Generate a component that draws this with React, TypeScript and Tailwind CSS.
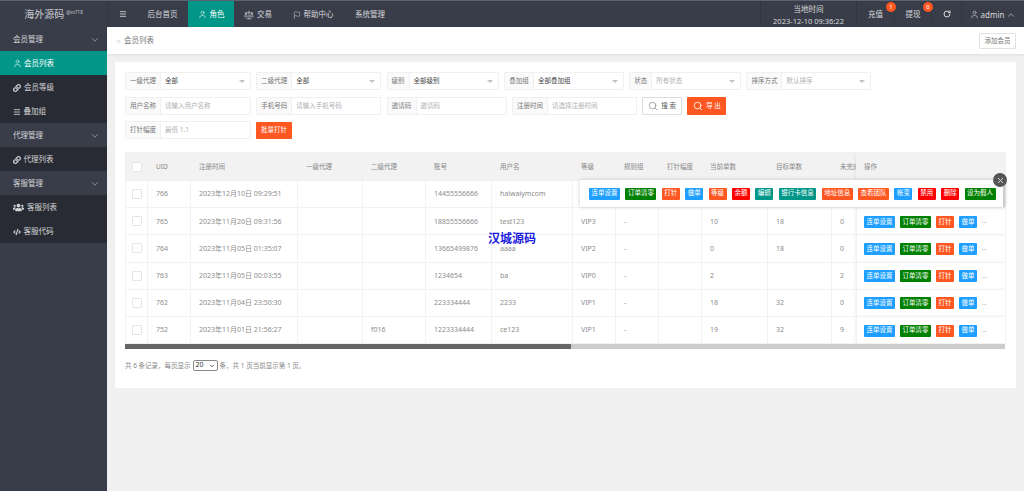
import { User, Menu, Flag, Scale, RotateCw, ChevronDown, ChevronUp, ChevronsRight, Search, X } from "lucide-react";
import { FaLink, FaUsers, FaCode } from "react-icons/fa";

const FONT = "font-['Noto_Sans','Noto_Sans_CJK_SC',sans-serif]";

function NavTab({ children, active, w }: { children: React.ReactNode; active?: boolean; w: string }) {
  return (
    <div className={`${w} flex items-center justify-center gap-[3px] pt-[1px] text-[7.5px] ${active ? "bg-[#009688] text-white" : "text-[#d8d9dc]"}`}>
      {children}
    </div>
  );
}

function SideHead({ label }: { label: string }) {
  return (
    <div className="h-6 flex items-center justify-between pl-[13px] pr-[7px] pt-[1px] bg-[#393d49] text-[#d4d5d8] text-[7.5px]">
      <span>{label}</span>
      <ChevronDown size={10} strokeWidth={1.5} className="text-[#c2c3c7]" />
    </div>
  );
}

function SideItem({ icon, label, active, gap }: { icon: React.ReactNode; label: string; active?: boolean; gap?: string }) {
  return (
    <div className={`h-6 flex items-center ${gap ?? "gap-[3px]"} pl-[13px] pt-[1px] text-[7.5px] ${active ? "bg-[#009688] text-white" : "bg-[#282b33] text-[#d4d5d8]"}`}>
      {icon}
      <span>{label}</span>
    </div>
  );
}

function Field({ label, value, placeholder, w, lw, select }: { label: string; value?: string; placeholder?: string; w: string; lw: string; select?: boolean }) {
  return (
    <div className={`${w} h-[18px] flex border border-[#f0f0f0] rounded-[1px] bg-white text-[6.5px]`}>
      <div className={`${lw} shrink-0 flex items-center justify-center bg-[#fafafa] border-r border-[#f0f0f0] text-[#777777]`}>{label}</div>
      <div className={`flex-1 flex items-center justify-between pl-[4px] pr-[5px] ${value ? "text-[#444444]" : "text-[#b0b0b0]"}`}>
        <span>{value ?? placeholder}</span>
        {select && <span className="w-0 h-0 border-x-[3px] border-x-transparent border-t-[3px] border-t-[#c2c2c2]" />}
      </div>
    </div>
  );
}

function Tag({ label, color }: { label: string; color: string }) {
  return <span className={`${color} h-[12px] px-[2.5px] shrink-0 flex items-center justify-center text-white text-[6.5px] leading-none whitespace-nowrap rounded-[1px]`}>{label}</span>;
}

const BLUE = "bg-[#1e9fff]";
const GREEN = "bg-[#008000]";
const ORANGE = "bg-[#ff5722]";
const RED = "bg-[#ff0000]";
const TEAL = "bg-[#009688]";

const rows = [
  ["766", "2023年12月10日 09:29:51", "", "", "14455556666", "haiwaiymcom", "", "", "", "", "", ""],
  ["765", "2023年11月20日 09:31:56", "", "", "18855556666", "test123", "VIP3", "-", "", "10", "18", "0"],
  ["764", "2023年11月05日 01:35:07", "", "", "13665499876", "aaaa", "VIP2", "-", "", "0", "18", "0"],
  ["763", "2023年11月05日 00:03:55", "", "", "1234654", "ba", "VIP0", "-", "", "2", "", "2"],
  ["762", "2023年11月04日 23:50:30", "", "", "223334444", "2233", "VIP1", "-", "", "18", "32", "0"],
  ["752", "2023年11月01日 21:56:27", "", "f016", "1223334444", "ce123", "VIP1", "-", "", "19", "32", "9"],
];
const headers = ["UID", "注册时间", "一级代理", "二级代理", "账号", "用户名", "等级", "规则组", "打针幅度", "当前单数", "目标单数", "未完成单数"];
const widths = ["w-[43px]", "w-[107px]", "w-[65px]", "w-[63px]", "w-[66px]", "w-[81px]", "w-[43px]", "w-[43px]", "w-[43px]", "w-[66px]", "w-[64px]", "w-[25px]"];

function Box() {
  return <span className="block w-[10px] h-[10px] bg-white border border-[#e6e6e6] rounded-[1px] mx-auto" />;
}

export default function App() {
  return (
    <div className={`${FONT} w-[1024px] h-[491px] overflow-hidden flex flex-col bg-[#f0f0f0]`}>
      <header className="h-[27px] shrink-0 flex bg-[#393d49] border-t border-[#5c6270] text-[#d8d9dc]">
        <div className="w-[107px] flex items-center justify-center gap-[2px] pt-[1px] text-[10px] text-[#c9cace]">
          <span>海外源码</span>
          <span className="text-[4.5px] -mt-[4px]">@xv718</span>
        </div>
        <div className="w-[30px] flex items-center justify-center border-l border-[#33363f]"><Menu size={8} strokeWidth={2.5} /></div>
        <NavTab w="w-[51px]"><span>后台首页</span></NavTab>
        <NavTab w="w-[46px]" active><User size={9} strokeWidth={1.5} /><span>角色</span></NavTab>
        <NavTab w="w-[48px]"><Scale size={10} strokeWidth={1.5} /><span>交易</span></NavTab>
        <NavTab w="w-[62px]"><Flag size={8} strokeWidth={1.5} /><span>帮助中心</span></NavTab>
        <NavTab w="w-[52px]"><span>系统管理</span></NavTab>
        <div className="flex-1" />
        <div className="w-[96px] flex flex-col items-center justify-center pt-[1px] text-[7.5px] leading-[12px] border-l border-[#33363f]">
          <span>当地时间</span>
          <span>2023-12-10 09:36:22</span>
        </div>
        <div className="relative w-[38px] flex items-center justify-center pt-[1px] text-[7.5px] border-l border-[#33363f]">
          充值
          <span className="absolute top-[1px] -right-[2px] z-10 w-[10px] h-[10px] rounded-full bg-[#ff5722] text-white text-[6px] flex items-center justify-center">1</span>
        </div>
        <div className="relative w-[37px] flex items-center justify-center pt-[1px] text-[7.5px] border-l border-[#33363f]">
          提现
          <span className="absolute top-[1px] -right-[2px] z-10 w-[10px] h-[10px] rounded-full bg-[#ff5722] text-white text-[6px] flex items-center justify-center">0</span>
        </div>
        <div className="w-[30px] flex items-center justify-center border-l border-[#33363f]"><RotateCw size={8} strokeWidth={3} /></div>
        <div className="w-[63px] flex items-center justify-center gap-[2px] pt-[1px] text-[8px] border-l border-[#33363f]">
          <User size={9} strokeWidth={1.5} /><span>admin</span><ChevronUp size={10} strokeWidth={1.5} />
        </div>
      </header>
      <div className="flex-1 flex min-h-0">
        <aside className="w-[107px] shrink-0 bg-[#393d49]">
          <SideHead label="会员管理" />
          <SideItem active gap="gap-[2px]" label="会员列表" icon={<User size={9} strokeWidth={1.5} />} />
          <SideItem label="会员等级" icon={<FaLink size={8} />} />
          <SideItem label="叠加组" gap="gap-[2.5px]" icon={<Menu size={8} strokeWidth={2.5} />} />
          <SideHead label="代理管理" />
          <SideItem label="代理列表" gap="gap-[2.5px]" icon={<FaLink size={8} />} />
          <SideHead label="客服管理" />
          <SideItem label="客服列表" gap="gap-[3px]" icon={<FaUsers size={11} />} />
          <SideItem label="客服代码" gap="gap-[2.5px]" icon={<FaCode size={8} />} />
        </aside>
        <main className="flex-1 min-w-0">
          <div className="h-[27px] bg-white flex items-center justify-between pl-[8px] pr-[8px] shadow-[0_1px_2px_rgba(0,0,0,0.08)]">
            <div className="flex items-center gap-[2px] pt-[1px] text-[6.5px] text-[#777777]">
              <ChevronsRight size={7} strokeWidth={1.5} className="text-[#aaaaaa]" />
              <span className="text-[7.5px]">会员列表</span>
            </div>
            <div className="w-[37px] h-[16px] flex items-center justify-center border border-[#e2e2e2] rounded-[1px] text-[6.5px] text-[#777777]">添加会员</div>
          </div>
          <div className="mx-[8px] mt-[8px] h-[326px] bg-white pt-[10px] pl-[10px] pr-[11px]">
            <div className="flex gap-[5.3px]">
              <Field w="w-[126px]" lw="w-[35px]" label="一级代理" value="全部" select />
              <Field w="w-[125px]" lw="w-[35px]" label="二级代理" value="全部" select />
              <Field w="w-[112px]" lw="w-[22px]" label="级别" value="全部级别" select />
              <Field w="w-[120px]" lw="w-[29px]" label="叠加组" value="全部叠加组" select />
              <Field w="w-[112px]" lw="w-[22px]" label="状态" placeholder="所有状态" select />
              <Field w="w-[125px]" lw="w-[35px]" label="排序方式" placeholder="默认排序" select />
            </div>
            <div className="flex gap-[5.3px] mt-[7px]">
              <Field w="w-[126px]" lw="w-[35px]" label="用户名称" placeholder="请输入用户名称" />
              <Field w="w-[125px]" lw="w-[35px]" label="手机号码" placeholder="请输入手机号码" />
              <Field w="w-[120px]" lw="w-[29px]" label="邀请码" placeholder="邀请码" />
              <Field w="w-[125px]" lw="w-[35px]" label="注册时间" placeholder="请选择注册时间" />
              <div className="w-[40px] h-[18px] flex items-center justify-center gap-[3px] border border-[#dddddd] rounded-[1px] text-[6.5px] text-[#555555]">
                <Search size={10} strokeWidth={1.5} className="text-[#777777]" /><span>搜 索</span>
              </div>
              <div className="w-[39px] h-[18px] flex items-center justify-center gap-[3px] rounded-[1px] bg-[#ff5722] text-white text-[6.5px]">
                <Search size={10} strokeWidth={2} /><span>导 出</span>
              </div>
            </div>
            <div className="flex gap-[5px] mt-[6px] items-center">
              <Field w="w-[126px]" lw="w-[35px]" label="打针幅度" placeholder="最低 1.1" />
              <div className="w-[36px] h-[17px] flex items-center justify-center rounded-[1px] bg-[#ff5722] text-white text-[6.5px]">批量打针</div>
            </div>
            <div className="relative mt-[13px]">
              <table className="table-fixed w-[880px] border-collapse text-[7px] text-[#8c8c8c]">
                <thead>
                  <tr className="h-[28px] bg-[#f2f2f2] text-[6.5px] text-[#888888]">
                    <th className="w-[22px] border border-[#f0f0f0] font-normal"><Box /></th>
                    {headers.map((h, i) => (
                      <th key={h} className={`${widths[i]} border border-[#f0f0f0] font-normal text-left px-[8px] pt-[1px] overflow-hidden whitespace-nowrap`}>{h}</th>
                    ))}
                    <th className="w-[149px] border border-[#f0f0f0] font-normal text-left px-[7px] pt-[1px] shadow-[-2px_0_3px_rgba(0,0,0,0.06)]">操作</th>
                  </tr>
                </thead>
                <tbody>
                  {rows.map((r, ri) => (
                    <tr key={r[0]} className="h-[27.2px]">
                      <td className="border border-[#f2f2f2]"><Box /></td>
                      {r.map((c, i) => (
                        <td key={i} className="border border-[#f2f2f2] px-[8px] pt-[1px] overflow-hidden whitespace-nowrap">{c}</td>
                      ))}
                      <td className="border border-[#f2f2f2] px-[7px] pt-[1px] shadow-[-2px_0_3px_rgba(0,0,0,0.06)]">
                        {ri > 0 && (
                          <div className="flex items-center gap-[5px]">
                            <Tag label="连单设置" color={BLUE} />
                            <Tag label="订单清零" color={GREEN} />
                            <Tag label="打针" color={ORANGE} />
                            <Tag label="做单" color={BLUE} />
                            <span className="text-[6px] text-[#999999]">...</span>
                          </div>
                        )}
                      </td>
                    </tr>
                  ))}
                </tbody>
              </table>
              <div className="flex h-[5px] w-[880px]">
                <div className="w-[446px] bg-[#666666]" />
                <div className="flex-1 bg-[#cccccc]" />
              </div>
              <div className="absolute left-[455px] top-[28px] w-[425px] h-[27px] bg-white shadow-[0_0_4px_rgba(0,0,0,0.2)] flex items-center gap-[5.4px] pl-[9px]">
                <Tag label="连单设置" color={BLUE} />
                <Tag label="订单清零" color={GREEN} />
                <Tag label="打针" color={ORANGE} />
                <Tag label="做单" color={BLUE} />
                <Tag label="等级" color={ORANGE} />
                <Tag label="余额" color={RED} />
                <Tag label="编辑" color={TEAL} />
                <Tag label="银行卡信息" color={TEAL} />
                <Tag label="地址信息" color={ORANGE} />
                <Tag label="查看团队" color={ORANGE} />
                <Tag label="帐变" color={BLUE} />
                <Tag label="禁用" color={RED} />
                <Tag label="删除" color={RED} />
                <Tag label="设为假人" color={GREEN} />
                <span className="absolute right-0 top-[4px] w-[2px] h-[23px] bg-[#cccccc]" />
              </div>
              <div className="absolute left-[868px] top-[21px] w-[14px] h-[14px] rounded-full bg-[#555555] flex items-center justify-center">
                <X size={9} strokeWidth={2.5} className="text-[#dddddd]" />
              </div>
              <div className="absolute left-[363px] top-[81px] text-[12px] leading-none font-bold text-[#1a1ae0] [text-shadow:0_0_2px_white]">汉城源码</div>
            </div>
            <div className="mt-[11px] flex items-center gap-[2px] text-[6.5px] text-[#888888]">
              <span>共 6 条记录，每页显示</span>
              <span className="w-[25px] h-[11px] border border-[#888888] rounded-[2px] flex items-center justify-between px-[2px] text-[7px] text-[#333333]">20<ChevronDown size={6} strokeWidth={3} /></span>
              <span>条，共 1 页当前显示第 1 页。</span>
            </div>
          </div>
        </main>
      </div>
    </div>
  );
}
